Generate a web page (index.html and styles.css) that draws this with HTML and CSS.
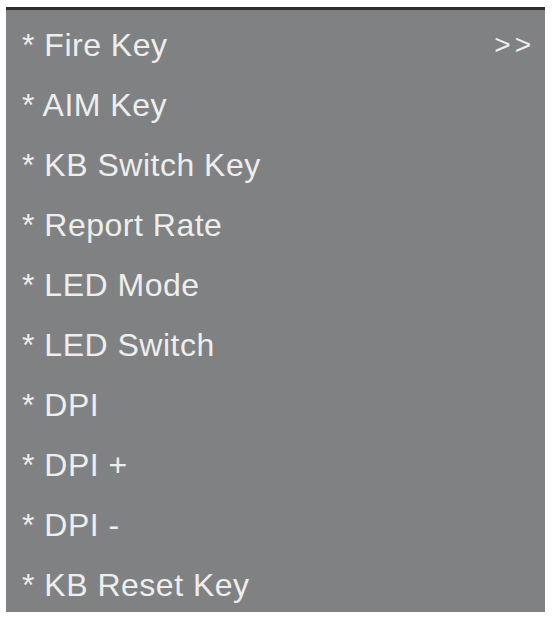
FILE: index.html
```html
<!DOCTYPE html>
<html>
<head>
<meta charset="utf-8">
<link rel="stylesheet" href="styles.css">
</head>
<body>
<div class="panel">
  <div class="row"><span>* Fire Key</span><span class="more">&gt;&gt;</span></div>
  <div class="row"><span>* AIM Key</span></div>
  <div class="row"><span>* KB Switch Key</span></div>
  <div class="row"><span>* Report Rate</span></div>
  <div class="row"><span>* LED Mode</span></div>
  <div class="row"><span>* LED Switch</span></div>
  <div class="row"><span>* DPI</span></div>
  <div class="row"><span>* DPI +</span></div>
  <div class="row"><span>* DPI -</span></div>
  <div class="row"><span>* KB Reset Key</span></div>
</div>
</body>
</html>
```
FILE: styles.css
```css
html, body {
  margin: 0;
  padding: 0;
  background: #ffffff;
}
.panel {
  margin: 7px 0 0 6px;
  width: 539px;
  height: 605px;
  box-sizing: border-box;
  background: #808183;
  border-top: 3px solid #2e2e2e;
  padding: 5px 14px 0 16px;
  font-family: "Liberation Sans", Arial, sans-serif;
  font-size: 32px;
  letter-spacing: 0.5px;
  color: #eeeeee;
}
.row {
  height: 60px;
  line-height: 60px;
  display: flex;
  justify-content: space-between;
  align-items: center;
  white-space: nowrap;
}
.more {
  font-size: 28px;
  letter-spacing: 4px;
  margin-right: -4px;
}
```
